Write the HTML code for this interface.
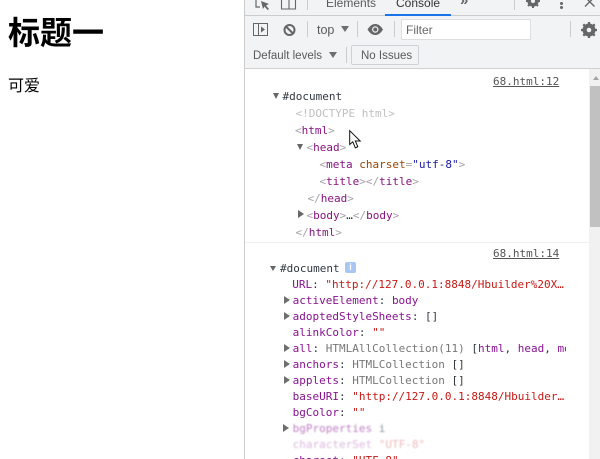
<!DOCTYPE html>
<html lang="zh">
<head>
<meta charset="utf-8">
<title>标题一</title>
<style>
html,body{margin:0;padding:0;width:600px;height:459px;overflow:hidden;background:#fff}
#root{position:relative;width:600px;height:459px;overflow:hidden;background:#fff}
.a{position:absolute;white-space:pre}
.ui{font:11.500px/16px "Liberation Sans",sans-serif;color:#5a5a5a}
.r{font:11px/16px "DejaVu Sans Mono","Liberation Mono",monospace;color:#333;transform:translateY(1px)}
.g{color:#a6a6a6}.b{color:#a8a0ab}
.tn{color:#881280}.at{color:#994500}.v{color:#1a1aa6}.k{color:#881391}.s{color:#c41a16}.o{color:#777}.d{color:#303942}
.sep{position:absolute;width:1px;background:#ccc}
.tri{position:absolute;width:0;height:0}
.down{border-left:4px solid transparent;border-right:4px solid transparent;border-top:6px solid #6e6e6e}
.right{border-top:4px solid transparent;border-bottom:4px solid transparent;border-left:6px solid #6e6e6e}
.small{border-left:3.500px solid transparent;border-right:3.500px solid transparent;border-top:6px solid #666}
svg{position:absolute;overflow:visible}
</style>
</head>
<body>
<div id="root">
<div class="a" style="left:8px;top:12px;font:bold 32px/42px 'Liberation Sans','Noto Sans CJK SC',sans-serif;color:#000">标题一</div>
<div class="a" style="left:8px;top:76px;font:16px/21px 'Liberation Sans','Noto Sans CJK SC',sans-serif;color:#000">可爱</div>

<div class="a" style="left:244px;top:0;width:356px;height:459px;background:#fff;border-left:1px solid #ccc;box-sizing:border-box"></div>
<div class="a" style="left:245px;top:0;width:355px;height:68px;background:#f1f3f4"></div>
<div class="a" style="left:245px;top:15px;width:355px;height:1px;background:#ccc"></div>
<div class="a" style="left:245px;top:68px;width:355px;height:1px;background:#d0d0d0"></div>
<div class="a" style="left:385px;top:14px;width:66px;height:2px;background:#1a73e8"></div>

<svg style="left:255px;top:0" width="16" height="10" viewBox="0 0 16 10"><path d="M1 0V7H5" fill="none" stroke="#666" stroke-width="1.200"/><path d="M6 1L14 4L11 5.500L14 9L12.500 10L9.500 6.500L8 9Z" fill="#666"/></svg>
<svg style="left:281px;top:0" width="16" height="10" viewBox="0 0 16 10"><path d="M.5 0V9H14.500V0M8 0V9" fill="none" stroke="#666" stroke-width="1.100"/></svg>
<div class="sep" style="left:307px;top:0;height:10px"></div>
<div class="a ui" style="left:326px;top:-5px;font-size:12px">Elements</div>
<div class="a ui" style="left:396px;top:-5px;font-size:12px;color:#333">Console</div>
<div class="a ui" style="left:460px;top:-7px;font-size:15px;font-weight:bold;color:#666">»</div>
<div class="sep" style="left:514px;top:0;height:10px"></div>
<svg style="left:526px;top:-6px" width="14" height="14" viewBox="0 0 14 14"><circle cx="7" cy="7" r="4.200" fill="none" stroke="#666" stroke-width="3"/><path d="M7 0V14M0 7H14M2 2L12 12M12 2L2 12" stroke="#666" stroke-width="2"/><circle cx="7" cy="7" r="2" fill="#f1f3f4"/></svg>
<div class="a" style="left:560px;top:2px;width:3px;height:3px;border-radius:50%;background:#666"></div>
<div class="a" style="left:560px;top:6px;width:3px;height:3px;border-radius:50%;background:#666"></div>
<svg style="left:584px;top:0" width="14" height="8" viewBox="0 0 14 8"><path d="M1-3L10.500 6.500M10.500-3L1 6.500" stroke="#666" stroke-width="1.400"/></svg>

<svg style="left:253px;top:23px" width="16" height="13" viewBox="0 0 16 13"><rect x=".5" y=".5" width="14" height="12" fill="none" stroke="#666"/><path d="M5.500 0V13" stroke="#666"/><path d="M8 3.500L12 6.500L8 9.500Z" fill="#666"/></svg>
<svg style="left:283px;top:24px" width="14" height="14" viewBox="0 0 14 14"><circle cx="6.500" cy="6" r="5" fill="none" stroke="#666" stroke-width="2"/><path d="M3 2.500L10 9.500" stroke="#666" stroke-width="2"/></svg>
<div class="sep" style="left:307px;top:21px;height:16px"></div>
<div class="a ui" style="left:317px;top:22px;font-size:12.500px">top</div>
<div class="tri down" style="left:341px;top:26px"></div>
<div class="sep" style="left:357px;top:21px;height:16px"></div>
<svg style="left:367px;top:24px" width="17" height="12" viewBox="0 0 17 12"><path d="M.5 5.500C3 1.500 5.500 0 8.250 0S13.500 1.500 16 5.500C13.500 9.500 11 11 8.250 11S3 9.500.5 5.500Z" fill="#666"/><circle cx="8.250" cy="5.500" r="3.200" fill="#f1f3f4"/><circle cx="8.250" cy="5.500" r="2" fill="#666"/></svg>
<div class="sep" style="left:394px;top:21px;height:16px"></div>
<div class="a" style="left:401px;top:19px;width:130px;height:21px;box-sizing:border-box;background:#fff;border:1px solid #dcdfe2"></div>
<div class="a ui" style="left:406px;top:22px;font-size:12px;color:#666">Filter</div>
<div class="sep" style="left:570px;top:21px;height:16px"></div>
<svg style="left:581px;top:22px" width="16" height="16" viewBox="0 0 14 14"><circle cx="7" cy="7" r="4.200" fill="none" stroke="#666" stroke-width="3"/><path d="M7 0V14M0 7H14M2 2L12 12M12 2L2 12" stroke="#666" stroke-width="2"/><circle cx="7" cy="7" r="2" fill="#f1f3f4"/></svg>

<div class="a ui" style="left:253px;top:48px">Default levels</div>
<div class="tri down" style="left:329px;top:52px"></div>
<div class="sep" style="left:346px;top:47px;height:16px"></div>
<div class="a" style="left:351px;top:45px;width:68px;height:20px;box-sizing:border-box;border:1px solid #cfd2d5;border-radius:2px"></div>
<div class="a ui" style="left:361px;top:48px">No Issues</div>

<div class="a" style="left:589px;top:69px;width:11px;height:390px;background:#f1f1f1"></div>
<div class="a" style="left:590px;top:86px;width:10px;height:141px;background:#c1c1c1"></div>
<div class="tri" style="left:593px;top:76px;border-left:3.500px solid transparent;border-right:3.500px solid transparent;border-bottom:4px solid #a3a3a3"></div>
<div class="a" style="left:245px;top:242px;width:344px;height:1px;background:#f0f0f0"></div>

<div class="a r" style="left:493px;top:73px;color:#555;text-decoration:underline">68.html:12</div>
<div class="tri small" style="left:273px;top:93px"></div>
<div class="a r d" style="left:282.500px;top:88px">#document</div>
<div class="a r g" style="left:295.500px;top:105px;color:#c0c0c0">&lt;!DOCTYPE html&gt;</div>
<div class="a r" style="left:295px;top:122px"><span class="b">&lt;</span><span class="tn">html</span><span class="b">&gt;</span></div>
<div class="tri small" style="left:297px;top:144px"></div>
<div class="a r" style="left:306.500px;top:139px"><span class="b">&lt;</span><span class="tn">head</span><span class="b">&gt;</span></div>
<div class="a r" style="left:319.500px;top:156px"><span class="b">&lt;</span><span class="tn">meta</span> <span class="at">charset</span><span class="b">=</span><span class="v">"utf-8"</span><span class="b">&gt;</span></div>
<div class="a r" style="left:319.500px;top:173px"><span class="b">&lt;</span><span class="tn">title</span><span class="b">&gt;&lt;/</span><span class="tn">title</span><span class="b">&gt;</span></div>
<div class="a r" style="left:307.500px;top:190px"><span class="b">&lt;/</span><span class="tn">head</span><span class="b">&gt;</span></div>
<div class="tri right" style="left:298px;top:210px;border-left-color:#666"></div>
<div class="a r" style="left:306.500px;top:207px"><span class="b">&lt;</span><span class="tn">body</span><span class="b">&gt;</span><span class="d">…</span><span class="b">&lt;/</span><span class="tn">body</span><span class="b">&gt;</span></div>
<div class="a r" style="left:295.500px;top:224px"><span class="b">&lt;/</span><span class="tn">html</span><span class="b">&gt;</span></div>

<svg style="left:349px;top:130px" width="13" height="20" viewBox="0 0 13 20"><path d="M.7.700V14.500L3.800 11.800L6.300 17.800L8.800 16.700L6.300 11H11.200Z" fill="#fff" stroke="#111" stroke-width="1"/></svg>

<div class="a r" style="left:493px;top:245px;color:#555;text-decoration:underline">68.html:14</div>
<div class="tri small" style="left:270px;top:266px;border-top-width:5px"></div>
<div class="a r d" style="left:280px;top:260px">#document</div>
<div class="a" style="left:345px;top:262px;width:11px;height:11px;border-radius:2px;background:#a9c7f5;color:#fff;font:bold 9px/11px 'Liberation Sans',sans-serif;text-align:center">i</div>

<div style="position:absolute;left:245px;top:276px;width:320.500px;height:183px;overflow:hidden;filter:blur(.25px)">
<div class="a r" style="left:47.300px;top:0"><span class="k">URL</span><span class="d">: </span><span class="s">"http://127.0.0.1:8848/Hbuilder%20X…</span></div>
<div class="a r" style="left:47.600px;top:16px"><span class="k">activeElement</span><span class="d">: </span><span class="k">body</span></div>
<div class="a r" style="left:47.600px;top:32px"><span class="k">adoptedStyleSheets</span><span class="d">: []</span></div>
<div class="a r" style="left:47.600px;top:48px"><span class="k">alinkColor</span><span class="d">: </span><span class="s">""</span></div>
<div class="a r" style="left:47.600px;top:64px"><span class="k">all</span><span class="d">: </span><span class="o">HTMLAllCollection(11) </span><span class="d">[</span><span class="k">html</span><span class="d">, </span><span class="k">head</span><span class="d">, </span><span class="k">meta</span></div>
<div class="a r" style="left:47.600px;top:80px"><span class="k">anchors</span><span class="d">: </span><span class="o">HTMLCollection </span><span class="d">[]</span></div>
<div class="a r" style="left:47.600px;top:96px"><span class="k">applets</span><span class="d">: </span><span class="o">HTMLCollection </span><span class="d">[]</span></div>
<div class="a r" style="left:47.600px;top:112px"><span class="k">baseURI</span><span class="d">: </span><span class="s">"http://127.0.0.1:8848/Hbuilder…</span></div>
<div class="a r" style="left:47.600px;top:128px"><span class="k">bgColor</span><span class="d">: </span><span class="s">""</span></div>
<div class="a r" style="left:47.600px;top:144px;opacity:.55;filter:blur(.8px)"><span class="k">bgProperties</span><span class="d"> i</span></div>
<div class="a r" style="left:47.600px;top:160px;opacity:.3;filter:blur(.9px)"><span class="k">characterSet</span><span class="s"> "UTF-8"</span></div>
<div class="a r" style="left:47.600px;top:176px"><span class="k">charset</span><span class="d">: </span><span class="s">"UTF-8"</span></div>
</div>
<div class="tri right" style="left:284px;top:296px"></div>
<div class="tri right" style="left:284px;top:312px"></div>
<div class="tri right" style="left:284px;top:344px"></div>
<div class="tri right" style="left:284px;top:360px"></div>
<div class="tri right" style="left:284px;top:376px"></div>
<div class="tri right" style="left:283px;top:424px"></div>
</div>
</body>
</html>
